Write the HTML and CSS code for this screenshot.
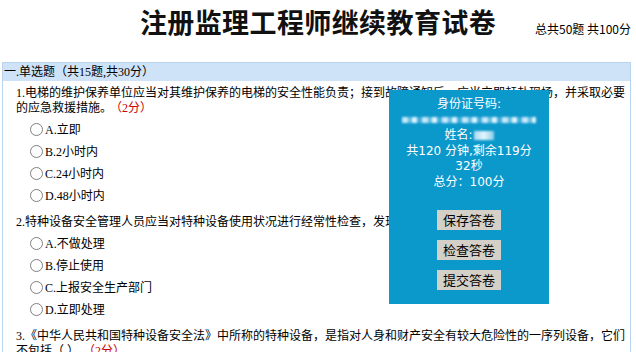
FILE: index.html
```html
<!DOCTYPE html>
<html lang="zh-CN">
<head>
<meta charset="utf-8">
<title>注册监理工程师继续教育试卷</title>
<link rel="stylesheet" href="styles.css">
</head>
<body>
<header class="top">
  <div class="top-spacer"></div>
  <h1 class="title">注册监理工程师继续教育试卷</h1>
  <div class="summary">总共50题 共100分</div>
</header>

<main class="paper">
  <div class="section-bar">一.单选题（共15题,共30分）</div>

  <div class="question">
    <p class="stem">1.电梯的维护保养单位应当对其维护保养的电梯的安全性能负责；接到故障通知后，应当立即赶赴现场，并采取必要的应急救援措施。<span class="score">（2分）</span></p>
    <ul class="options">
      <li class="option"><span class="radio"></span>A.立即</li>
      <li class="option"><span class="radio"></span>B.2小时内</li>
      <li class="option"><span class="radio"></span>C.24小时内</li>
      <li class="option"><span class="radio"></span>D.48小时内</li>
    </ul>
  </div>

  <div class="question">
    <p class="stem">2.特种设备安全管理人员应当对特种设备使用状况进行经常性检查，发现问题应当（ ）。<span class="score">（2分）</span></p>
    <ul class="options">
      <li class="option"><span class="radio"></span>A.不做处理</li>
      <li class="option"><span class="radio"></span>B.停止使用</li>
      <li class="option"><span class="radio"></span>C.上报安全生产部门</li>
      <li class="option"><span class="radio"></span>D.立即处理</li>
    </ul>
  </div>

  <div class="question">
    <p class="stem">3.《中华人民共和国特种设备安全法》中所称的特种设备，是指对人身和财产安全有较大危险性的一序列设备，它们不包括（ ）。<span class="score">（2分）</span></p>
    <ul class="options">
      <li class="option"><span class="radio"></span>A.锅炉</li>
      <li class="option"><span class="radio"></span>B.压力容器</li>
    </ul>
  </div>
</main>

<aside class="timer-panel">
  <div class="info">
    <div>身份证号码:</div>
    <div class="blur-row"><span class="blur-id"></span></div>
    <div>姓名:<span class="blur-name"></span></div>
    <div>共120 分钟,剩余119分<br>32秒</div>
    <div>总分：100分</div>
  </div>
  <div class="actions">
    <button class="btn" type="button">保存答卷</button>
    <button class="btn" type="button">检查答卷</button>
    <button class="btn" type="button">提交答卷</button>
  </div>
</aside>
</body>
</html>
```

FILE: styles.css
```css
html, body {
  margin: 0;
  padding: 0;
  background: #ffffff;
}

body {
  font-family: "Liberation Serif", "Noto Sans CJK SC", serif;
  font-size: 12px;
  color: #000000;
  overflow: hidden;
}

.top {
  display: grid;
  grid-template-columns: 1fr auto 1fr;
  padding-top: 4px;
  height: 36px;
}

.title {
  margin: 0;
  font-family: "Noto Sans CJK SC", sans-serif;
  font-size: 27px;
  font-weight: 700;
  line-height: 36px;
  letter-spacing: 0.4px;
  color: #111;
}

.summary {
  justify-self: end;
  align-self: end;
  padding: 0 5px 3px 0;
  font-family: "Noto Sans CJK SC", sans-serif;
  font-size: 12px;
  line-height: 16px;
}

.paper {
  margin: 22px 0 0 2px;
  width: 627px;
  border: 1px solid #b8d4ee;
  border-bottom: none;
  min-height: 300px;
}

.section-bar {
  background: #cfe3f8;
  height: 18px;
  line-height: 18px;
  padding-left: 1px;
}

.question {
  padding: 5px 0 0 13px;
  margin-bottom: 4px;
}

.stem {
  margin: 0;
  line-height: 15px;
}

.score {
  color: #cc0000;
  margin-left: 4px;
}

.options {
  list-style: none;
  margin: 2px 0 0 0;
  padding: 0 0 0 14px;
}

.option {
  display: flex;
  align-items: center;
  height: 22px;
}

.radio {
  width: 11px;
  height: 11px;
  border: 1px solid #808080;
  border-radius: 50%;
  background: #fff;
  margin-right: 2px;
}

.timer-panel {
  position: absolute;
  left: 389px;
  top: 90px;
  width: 160px;
  height: 214px;
  box-sizing: border-box;
  padding-top: 7px;
  background: #0b98cb;
  color: #ffffff;
  font-family: "DejaVu Sans", "Noto Sans CJK SC", sans-serif;
  font-size: 12px;
  text-align: center;
}

.info {
  line-height: 15.6px;
}

.blur-row {
  height: 15.6px;
  display: flex;
  justify-content: center;
  align-items: center;
}

.blur-id {
  display: block;
  width: 134px;
  height: 6px;
  background: repeating-linear-gradient(90deg,
    rgba(220, 240, 255, 0.9) 0 6px,
    rgba(160, 215, 240, 0.6) 6px 10px,
    rgba(235, 248, 255, 0.95) 10px 15px,
    rgba(120, 200, 235, 0.5) 15px 20px);
  filter: blur(1.2px);
}

.blur-name {
  display: inline-block;
  width: 20px;
  height: 9px;
  margin-left: 1px;
  vertical-align: middle;
  background: linear-gradient(90deg, rgba(210, 235, 250, 0.8), rgba(240, 250, 255, 0.95), rgba(190, 228, 245, 0.7));
  filter: blur(1.3px);
}

.actions {
  display: flex;
  flex-direction: column;
  align-items: center;
  gap: 10px;
  margin-top: 19px;
}

.btn {
  width: 64px;
  height: 20px;
  padding: 0;
  border: none;
  background: #d4d0c8;
  color: #000;
  font-family: "Noto Sans CJK SC", sans-serif;
  font-size: 13px;
  line-height: 20px;
}
```
